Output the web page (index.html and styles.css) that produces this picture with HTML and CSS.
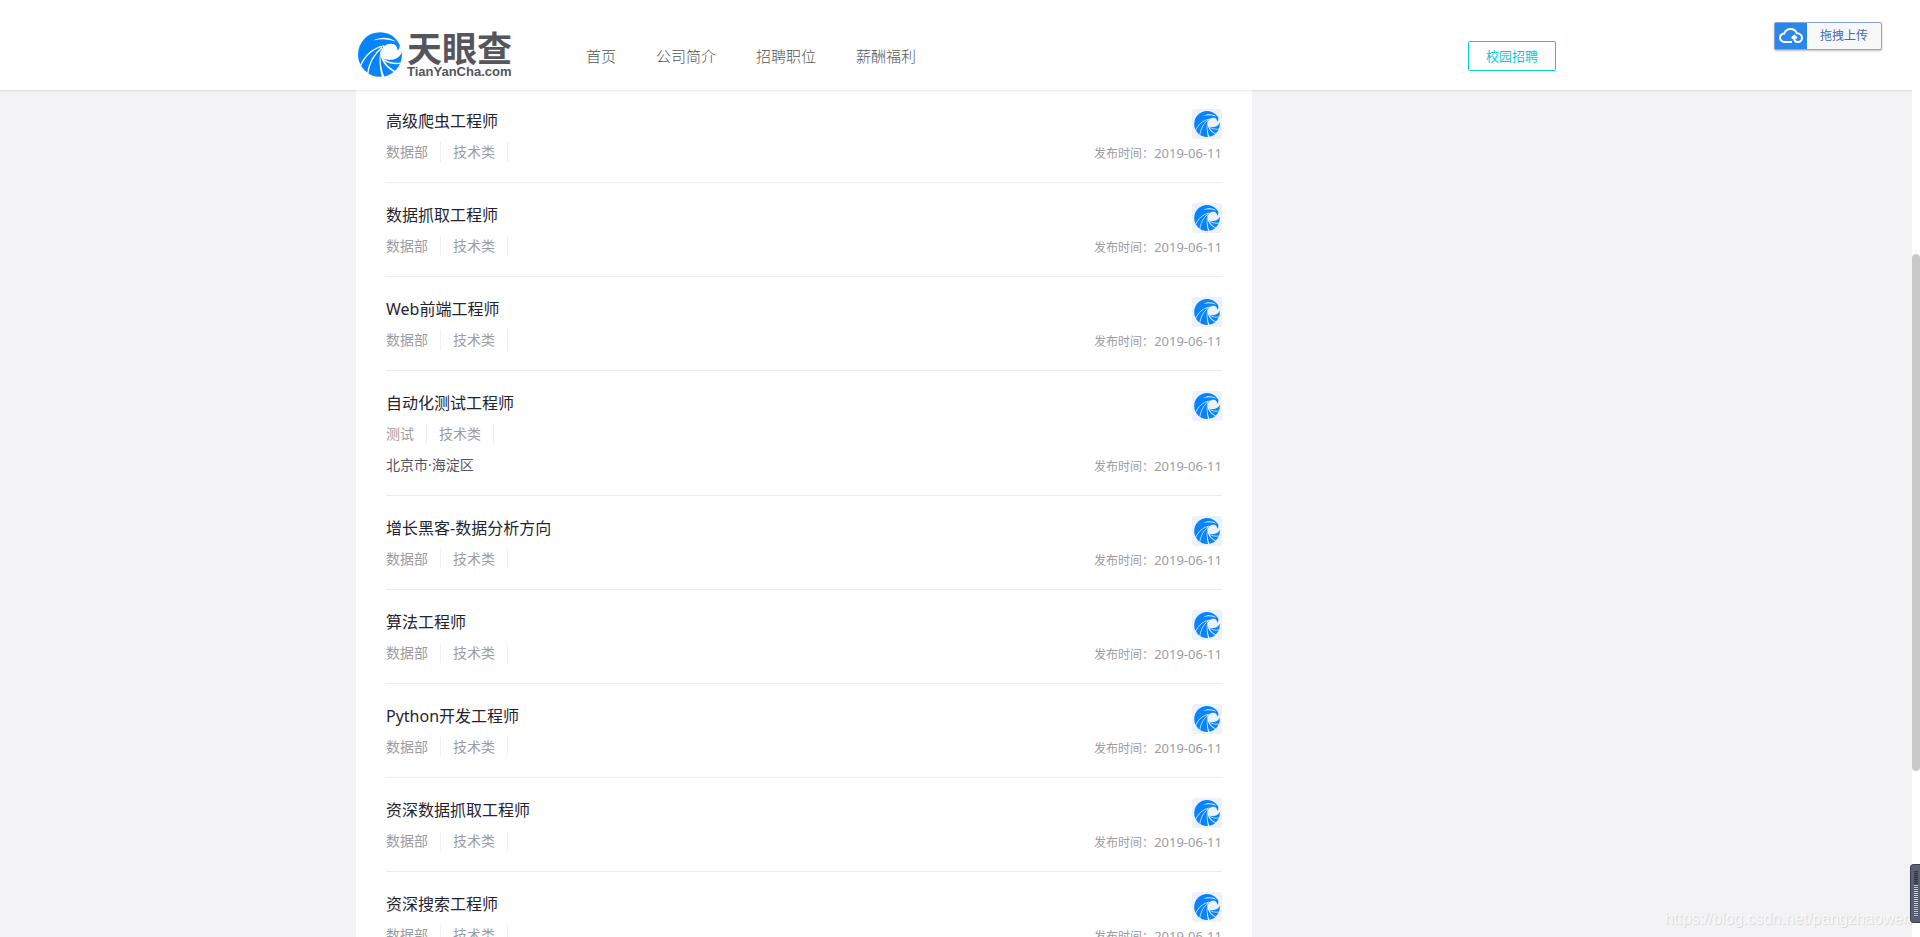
FILE: index.html
```
<!DOCTYPE html>
<html lang="zh-CN">
<head>
<meta charset="utf-8">
<title>天眼查 招聘职位</title>
<link rel="stylesheet" href="styles.css">
</head>
<body>
<svg class="defs" aria-hidden="true">
  <symbol id="bird" viewBox="0 0 132 134">
    <ellipse cx="66" cy="67" rx="66" ry="67" fill="#0684ff"/>
    <path fill="currentColor" d="M70 78C64 50 80 34 100 35c12 1 18 8 19 20 5-5 6-9 6-14l14-4v22l-8 2c-3 10-14 20-30 22-10 1-18 0-24-3 4 14 16 27 38 38l-3 3C92 112 78 98 70 78z"/>
    <path fill="currentColor" d="M46 25c20-12 50-12 68 4-22-8-44-10-68-4z"/>
    <path fill="currentColor" d="M112 6c9 8 14 20 14 38l10-2V6z"/>
    <path fill="currentColor" d="M72 50c-7 22-6 54 8 86h-8C64 108 62 76 68 56z"/>
    <g fill="none" stroke="currentColor" stroke-width="4">
      <path d="M6 104C20 70 44 48 78 41"/>
      <path d="M28 130C32 98 44 68 72 46"/>
      <path d="M78 83c14 9 30 13 50 10"/>
    </g>
  </symbol>
</svg>
<div class="page">
  <header class="header">
    <div class="container bar">
      <a class="logo" href="#">
        <svg class="logo-mark" aria-hidden="true"><use href="#bird"/></svg>
        <span class="logo-words"><span class="logo-cn">天眼查</span><span class="logo-en">TianYanCha.com</span></span>
      </a>
      <nav class="nav">
        <a href="#">首页</a><a href="#">公司简介</a><a href="#">招聘职位</a><a href="#">薪酬福利</a>
      </nav>
      <a class="campus" href="#">校园招聘</a>
    </div>
  </header>
  <main class="container">
    <ul class="jobs">
      <li class="job"><div class="info"><a class="title" href="#">高级爬虫工程师</a><p class="tags"><span>数据部</span><span>技术类</span></p></div><div class="side"><svg class="avatar" aria-hidden="true"><use href="#bird"/></svg><p class="date">发布时间：<time>2019-06-11</time></p></div></li>
      <li class="job"><div class="info"><a class="title" href="#">数据抓取工程师</a><p class="tags"><span>数据部</span><span>技术类</span></p></div><div class="side"><svg class="avatar" aria-hidden="true"><use href="#bird"/></svg><p class="date">发布时间：<time>2019-06-11</time></p></div></li>
      <li class="job"><div class="info"><a class="title" href="#">Web前端工程师</a><p class="tags"><span>数据部</span><span>技术类</span></p></div><div class="side"><svg class="avatar" aria-hidden="true"><use href="#bird"/></svg><p class="date">发布时间：<time>2019-06-11</time></p></div></li>
      <li class="job"><div class="info"><a class="title" href="#">自动化测试工程师</a><p class="tags"><span>测试</span><span>技术类</span></p><p class="place">北京市·海淀区</p></div><div class="side"><svg class="avatar" aria-hidden="true"><use href="#bird"/></svg><p class="date">发布时间：<time>2019-06-11</time></p></div></li>
      <li class="job"><div class="info"><a class="title" href="#">增长黑客-数据分析方向</a><p class="tags"><span>数据部</span><span>技术类</span></p></div><div class="side"><svg class="avatar" aria-hidden="true"><use href="#bird"/></svg><p class="date">发布时间：<time>2019-06-11</time></p></div></li>
      <li class="job"><div class="info"><a class="title" href="#">算法工程师</a><p class="tags"><span>数据部</span><span>技术类</span></p></div><div class="side"><svg class="avatar" aria-hidden="true"><use href="#bird"/></svg><p class="date">发布时间：<time>2019-06-11</time></p></div></li>
      <li class="job"><div class="info"><a class="title" href="#">Python开发工程师</a><p class="tags"><span>数据部</span><span>技术类</span></p></div><div class="side"><svg class="avatar" aria-hidden="true"><use href="#bird"/></svg><p class="date">发布时间：<time>2019-06-11</time></p></div></li>
      <li class="job"><div class="info"><a class="title" href="#">资深数据抓取工程师</a><p class="tags"><span>数据部</span><span>技术类</span></p></div><div class="side"><svg class="avatar" aria-hidden="true"><use href="#bird"/></svg><p class="date">发布时间：<time>2019-06-11</time></p></div></li>
      <li class="job"><div class="info"><a class="title" href="#">资深搜索工程师</a><p class="tags"><span>数据部</span><span>技术类</span></p></div><div class="side"><svg class="avatar" aria-hidden="true"><use href="#bird"/></svg><p class="date">发布时间：<time>2019-06-11</time></p></div></li>
    </ul>
  </main>
</div>
<div class="track"><div class="thumb"></div></div>
<button class="upload" type="button">
  <span class="upload-icon"><svg viewBox="0 0 24 16" aria-hidden="true"><path d="M13 14H5.500a4.300 4.300 0 0 1-.3-8.600C6.500 2.500 8.800 1 11.500 1c3.200 0 5.300 1.600 6.300 4.300 2.900.2 5.200 2 5.200 4.500 0 2.300-1.700 4.200-4 4.200-2.200 0-3.700-1.500-3.700-3.500V8.500M12.800 10.500l2.500-2.800 2.700 2.500"/></svg></span>
  <span class="upload-text">拖拽上传</span>
</button>
<div class="watermark">https://blog.csdn.net/pangzhaowen</div>
<div class="meter"><i></i></div>
</body>
</html>
```
FILE: styles.css
```
* { box-sizing: border-box; }
html, body { height: 100%; margin: 0; }
body {
  display: flex;
  overflow: hidden;
  background: #f3f3f5;
  color: #1f2430;
  font-family: "Noto Sans", "Noto Sans CJK SC", sans-serif;
  font-size: 14px;
}
a { color: inherit; text-decoration: none; }
p, ul { margin: 0; padding: 0; }
.defs { position: absolute; width: 0; height: 0; }
.page { flex: 1; overflow: hidden; }
.container { max-width: 1200px; margin: 0 auto; }

.header {
  position: relative;
  height: 90px;
  background: #fff;
  box-shadow: 0 1px 2px rgba(0, 0, 0, 0.1);
}
.bar { display: flex; align-items: center; padding-top: 22px; }
.logo { display: flex; align-items: center; gap: 5px; padding-left: 2px; height: 64px; }
.logo-mark { width: 44px; height: 45px; color: #fff; }
.logo-words { display: flex; flex-direction: column; gap: 2px; color: #55555d; font-weight: 700; }
.logo-cn { font-size: 35px; line-height: 34px; font-family: "Noto Sans CJK SC", sans-serif; }
.logo-en { font-size: 13px; line-height: 12px; font-family: "Liberation Sans", sans-serif; }
.nav { display: flex; gap: 40px; margin-left: 74px; padding-top: 4px; color: #555; font-size: 15px; font-weight: 300; line-height: 24px; }
.campus {
  margin: 4px 0 0 auto;
  width: 88px;
  border: 1px solid #00d0d8;
  border-radius: 2px;
  color: #00d0d8;
  font-size: 13px;
  line-height: 28px;
  text-align: center;
}

.jobs { max-width: 896px; padding: 0 30px; background: #fff; list-style: none; }
.job {
  display: flex;
  justify-content: space-between;
  padding: 20px 0 19px;
  border-bottom: 1px solid #ececee;
}
.job:first-child { padding-top: 19px; }
.title { display: block; font-size: 16px; line-height: 24px; }
.tags { display: flex; margin-top: 9px; color: #9c9ca2; line-height: 20px; }
.tags span { padding-right: 12px; margin-right: 12px; border-right: 1px solid #f0f0f2; }
.place { margin: 11px 0 1px; color: #545466; line-height: 20px; }
.tags:last-child { margin-bottom: 1px; }
.side { display: flex; flex-direction: column; align-items: flex-end; justify-content: space-between; }
.avatar { width: 30px; height: 30px; padding: 2px; border-radius: 3px; background: #edf1f9; color: #edf1f9; }
.date { color: #9c9ca2; font-size: 12px; line-height: 18px; }
.date time { font-size: 13px; }

.track { flex: none; width: 8px; background: #fff; padding-top: 254px; }
.thumb { height: 517px; border-radius: 4px; background: #c9c9c9; }

.upload {
  position: absolute;
  top: 22px;
  right: 38px;
  display: flex;
  width: 108px;
  height: 28px;
  padding: 0;
  border: 1px solid #84a8da;
  border-radius: 2px;
  background: #f8f8f8;
  box-shadow: 0 1px 2px rgba(0, 0, 0, 0.25);
  color: #3a69b0;
  font: 12px/26px "Noto Sans", "Noto Sans CJK SC", sans-serif;
}
.upload-icon { display: flex; align-items: center; justify-content: center; width: 32px; height: 26px; background: #2b88ea; }
.upload-icon svg { width: 24px; height: 16px; fill: none; stroke: #fff; stroke-width: 2; }
.upload-text { flex: 1; text-align: center; }

.watermark {
  position: absolute;
  right: 8px;
  bottom: 8px;
  color: #f8f8f9;
  font: 16px/20px "Liberation Sans", sans-serif;
  text-shadow: 1px 1px 1px #d4d4d6;
}
.meter {
  position: absolute;
  right: 0;
  bottom: 14px;
  width: 10px;
  height: 59px;
  padding: 6px 2px 0 3px;
  border: 1px solid #3d404c;
  border-right: 0;
  border-radius: 4px 0 0 4px;
  background: #5d6070;
}
.meter i {
  display: block;
  height: 46px;
  background:
    repeating-linear-gradient(transparent 0 1px, #4c505e 1px 2px),
    linear-gradient(#343640 0 14px, #f5cf5c 14px, #dbe686 26px, #7de0d6 46px);
}
```
